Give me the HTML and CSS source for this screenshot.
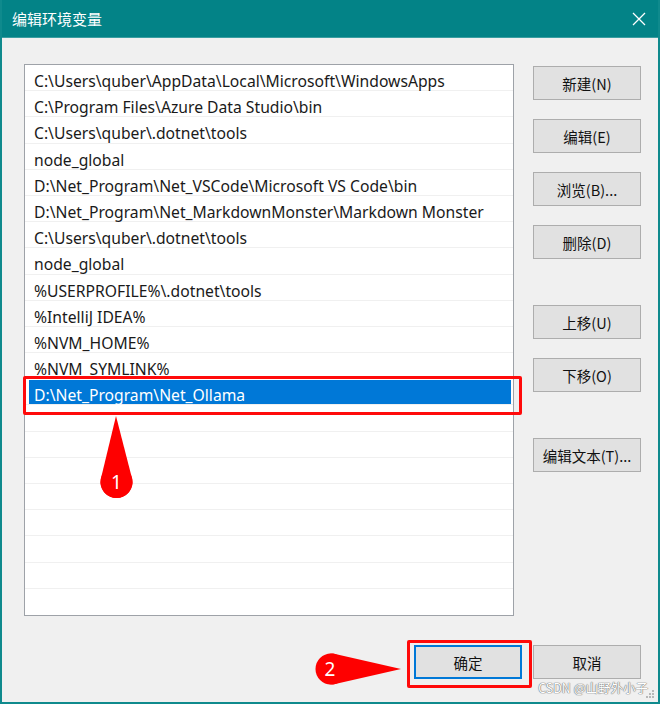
FILE: index.html
```html
<!DOCTYPE html>
<html lang="zh">
<head>
<meta charset="utf-8">
<title>编辑环境变量</title>
<link rel="stylesheet" href="styles.css">
</head>
<body>
<div class="window">
  <div class="titlebar">
    <span class="title">编辑环境变量</span>
    <svg class="close" width="14" height="14" viewBox="0 0 14 14"><path d="M1 1L13 13M13 1L1 13" stroke="#fff" stroke-width="1.3" fill="none"/></svg>
  </div>
  <div class="content">
    <div class="main">
      <div class="list">
        <div class="row">C:\Users\quber\AppData\Local\Microsoft\WindowsApps</div>
        <div class="row">C:\Program Files\Azure Data Studio\bin</div>
        <div class="row">C:\Users\quber\.dotnet\tools</div>
        <div class="row">node_global</div>
        <div class="row">D:\Net_Program\Net_VSCode\Microsoft VS Code\bin</div>
        <div class="row">D:\Net_Program\Net_MarkdownMonster\Markdown Monster</div>
        <div class="row">C:\Users\quber\.dotnet\tools</div>
        <div class="row">node_global</div>
        <div class="row">%USERPROFILE%\.dotnet\tools</div>
        <div class="row">%IntelliJ IDEA%</div>
        <div class="row">%NVM_HOME%</div>
        <div class="row">%NVM_SYMLINK%</div>
        <div class="row selected"><span class="sel">D:\Net_Program\Net_Ollama</span></div>
        <div class="row"></div>
        <div class="row"></div>
        <div class="row"></div>
        <div class="row"></div>
        <div class="row"></div>
        <div class="row"></div>
        <div class="row"></div>
        <div class="row last"></div>
      </div>
      <div class="side">
        <button class="btn">新建(N)</button>
        <button class="btn">编辑(E)</button>
        <button class="btn">浏览(B)...</button>
        <button class="btn">删除(D)</button>
        <button class="btn gap-big">上移(U)</button>
        <button class="btn">下移(O)</button>
        <button class="btn gap-big">编辑文本(T)...</button>
      </div>
    </div>
    <div class="footer">
      <button class="btn primary">确定</button>
      <button class="btn">取消</button>
    </div>
  </div>
  <div class="hl hl-row"></div>
  <div class="hl hl-ok"></div>
  <svg class="overlay" width="660" height="704" viewBox="0 0 660 704">
    <path d="M116 416 L100.8 479 A16 16 0 1 0 132.2 479 Z" fill="#fe0000"/>
    <circle cx="116.5" cy="482" r="16" fill="#fe0000"/>
    <text x="116.5" y="489" class="num">1</text>
    <path d="M401 669 L333 653.5 A15.5 15.5 0 1 0 333 684.5 Z" fill="#fe0000"/>
    <circle cx="331" cy="669" r="15.5" fill="#fe0000"/>
    <text x="330" y="676" class="num">2</text>
    <g fill="#b8b8b8">
      <rect x="652" y="690" width="2" height="2"/>
      <rect x="649" y="693" width="2" height="2"/>
      <rect x="652" y="693" width="2" height="2"/>
      <rect x="646" y="696" width="2" height="2"/>
      <rect x="649" y="696" width="2" height="2"/>
      <rect x="652" y="696" width="2" height="2"/>
    </g>
  </svg>
  <div class="watermark">CSDN @山野外小子</div>
</div>
</body>
</html>
```
FILE: styles.css
```css
* { box-sizing: border-box; }
html, body { margin: 0; padding: 0; background: #f0f0f0; }
body { font-family: "Noto Sans", "Noto Sans CJK SC", sans-serif; }

.window {
  position: relative;
  width: 660px;
  height: 704px;
  background: #f0f0f0;
  border-left: 2px solid #0f8a8d;
  border-right: 2px solid #0f8a8d;
  border-bottom: 2px solid #0f8a8d;
  display: flex;
  flex-direction: column;
  overflow: hidden;
}

.titlebar {
  height: 38px;
  margin: 0 -2px;
  background: #038387;
  border-bottom: 1px solid #3a9ea1;
  display: flex;
  align-items: center;
  justify-content: space-between;
  padding: 0 14px 0 12px;
  flex-shrink: 0;
}
.title {
  color: #fff;
  font-family: "Noto Sans CJK SC", sans-serif;
  font-size: 15px;
}
.close { display: block; }

.content {
  flex: 1;
  display: flex;
  flex-direction: column;
  padding: 26px 17px 0 22px;
}

.main {
  display: flex;
  gap: 19px;
}

.list {
  width: 490px;
  height: 552px;
  border: 1px solid #9ea2a8;
  background: #fff;
  overflow: hidden;
}
.row {
  height: 26.2px;
  border-bottom: 1px solid #f0f0f0;
  font-size: 15.7px;
  color: #1a1a1a;
  line-height: 25px;
  padding: 4px 0 0 9px;
  white-space: nowrap;
}
.row.last { border-bottom: none; }
.row.selected {
  padding: 1px 2px 0 4px;
}
.sel {
  display: block;
  height: 24px;
  line-height: 24px;
  background: #0078d7;
  color: #fff;
  padding: 3px 0 0 5px;
}

.side {
  display: flex;
  flex-direction: column;
  padding-top: 2px;
}

.btn {
  width: 108px;
  height: 34px;
  background: #e1e1e1;
  border: 1px solid #adadad;
  font-family: "Noto Sans CJK SC", sans-serif;
  font-size: 14.5px;
  color: #111;
  padding: 0;
  margin: 0;
}
.side .btn + .btn { margin-top: 19px; }
.side .btn.gap-big { margin-top: 46px; }

.footer {
  display: flex;
  justify-content: flex-end;
  gap: 11px;
  margin-top: 29px;
}
.btn.primary {
  border: 2px solid #0078d7;
}

.hl {
  position: absolute;
  border: 3px solid #ff0a0a;
  border-radius: 2px;
  pointer-events: none;
}
.hl-row { left: 21px; top: 376px; width: 499px; height: 39px; }
.hl-ok { left: 405px; top: 640px; width: 125px; height: 48px; }

.overlay {
  position: absolute;
  left: -2px;
  top: 0;
  pointer-events: none;
}
.num {
  fill: #fff;
  font-family: "Noto Sans", sans-serif;
  font-size: 19px;
  text-anchor: middle;
}

.watermark {
  position: absolute;
  right: 10px;
  bottom: 5px;
  font-family: "Noto Sans CJK SC", sans-serif;
  font-size: 12.5px;
  color: #fff;
  text-shadow: 0 0 1px #777, 0 0 1px #777, 0 0 1px #777;
}
```
